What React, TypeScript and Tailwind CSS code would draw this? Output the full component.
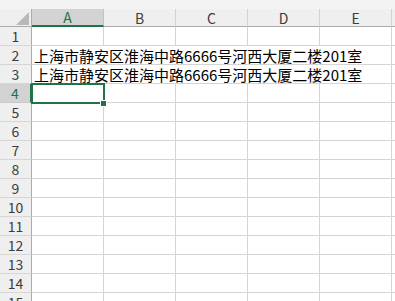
import React from 'react';

const cols = ['A', 'B', 'C', 'D', 'E'];
const rows = Array.from({ length: 15 }, (_, i) => i + 1);
const address = '上海市静安区淮海中路6666号河西大厦二楼201室';

const RowHeader: React.FC<{ n: number; selected?: boolean }> = ({ n, selected }) => (
  <div
    className={
      selected
        ? 'h-[19px] flex items-center justify-center bg-[#d2d2d2] border-b border-[#c9c9c9] border-r-2 border-r-[#217346] text-[#217346]'
        : 'h-[19px] flex items-center justify-center bg-[#efefef] border-b border-[#d6d6d6] border-r border-r-[#ababab] text-[#3c3c3c]'
    }
  >
    <span className="text-[14px] leading-none">{n}</span>
  </div>
);

export default function App() {
  return (
    <div
      className="w-[395px] h-[301px] overflow-hidden bg-white select-none"
      style={{ fontFamily: '"Noto Sans CJK SC", "Noto Sans", sans-serif' }}
    >
      {/* strip above the headers */}
      <div className="h-[9px] bg-[#f3f3f3]" />

      <div className="grid grid-cols-[32px_72px_72px_72px_72px_72px_1fr]">
        {/* corner + column headers */}
        <div className="h-[18px] bg-[#efefef] border-r border-b border-[#ababab] flex items-end justify-end pr-[2px] pb-[1px]">
          <svg width="13" height="13" viewBox="0 0 13 13">
            <polygon points="13,0 13,13 0,13" fill="#b9b9b9" />
          </svg>
        </div>
        {cols.map((c) => (
          <div
            key={c}
            className={
              c === 'A'
                ? 'h-[18px] flex items-center justify-center bg-[#d3d3d3] border-r border-[#c2c2c2] border-b-2 border-b-[#217346] text-[#217346]'
                : 'h-[18px] flex items-center justify-center bg-[#efefef] border-r border-[#d2d2d2] border-b border-b-[#ababab] text-[#3c3c3c]'
            }
          >
            <span className="text-[14px] leading-none">{c}</span>
          </div>
        ))}
        <div className="h-[18px] bg-[#efefef] border-b border-[#ababab]" />

        {rows.map((r) => {
          if (r === 2 || r === 3) {
            return (
              <React.Fragment key={r}>
                <RowHeader n={r} />
                <div className="col-span-5 h-[19px] border-r border-b border-[#d4d4d4] flex items-end pl-[2px]">
                  <span className="text-[15px] leading-[17px] text-black whitespace-nowrap">{address}</span>
                </div>
                <div className="h-[19px] border-b border-[#d4d4d4]" />
              </React.Fragment>
            );
          }
          return (
            <React.Fragment key={r}>
              <RowHeader n={r} selected={r === 4} />
              {cols.map((c) => (
                <div
                  key={c}
                  className={
                    r === 4 && c === 'A'
                      ? 'relative z-10 h-[19px] border-r border-b border-[#d4d4d4]'
                      : 'relative h-[19px] border-r border-b border-[#d4d4d4]'
                  }
                >
                  {r === 4 && c === 'A' && (
                    <>
                      <div className="absolute left-[-1px] top-[-1px] w-[74px] h-[21px] border-2 border-[#217346]" />
                      <div className="absolute left-[68px] top-[16px] w-[7px] h-[7px] bg-[#217346] border border-white" />
                    </>
                  )}
                </div>
              ))}
              <div className="h-[19px] border-b border-[#d4d4d4]" />
            </React.Fragment>
          );
        })}
      </div>
    </div>
  );
}
